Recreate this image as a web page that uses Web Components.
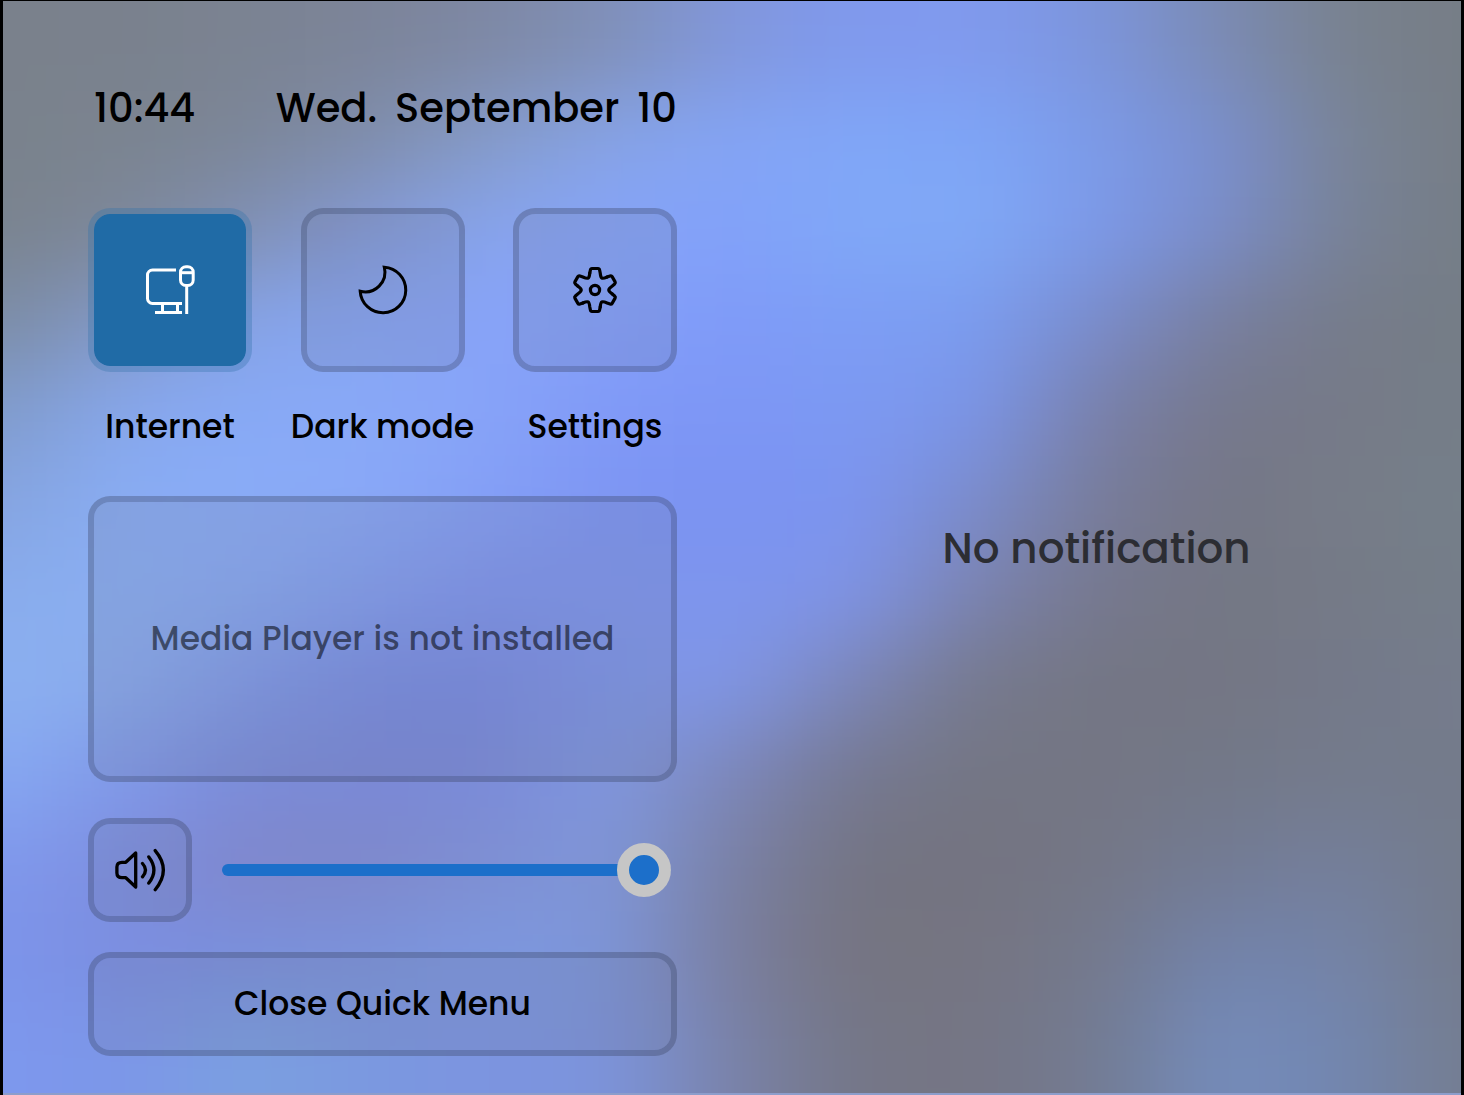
<!DOCTYPE html>
<html lang="en">
<head>
<meta charset="utf-8">
<title>Quick Menu</title>
<style>
  html, body { margin: 0; background: #000; }
  body { font-family: Poppins, Inter, "Open Sans", sans-serif; font-weight: 500; color: #000; }
</style>
</head>
<body>
<quick-menu>
  <quick-clock slot="menu"></quick-clock>
  <quick-tiles slot="menu">
    <quick-tile icon="network" label="Internet" active></quick-tile>
    <quick-tile icon="moon" label="Dark mode"></quick-tile>
    <quick-tile icon="gear" label="Settings"></quick-tile>
  </quick-tiles>
  <media-card slot="menu">Media Player is not installed</media-card>
  <volume-control slot="menu"></volume-control>
  <close-button slot="menu">Close Quick Menu</close-button>
  <notification-list slot="notifications">No notification</notification-list>
</quick-menu>
<script>
const define = (name, html, setup) => customElements.define(name, class extends HTMLElement {
  connectedCallback() {
    if (this.shadowRoot) return;
    this.attachShadow({ mode: 'open' }).innerHTML = html;
    if (setup) setup(this, this.shadowRoot);
  }
});

const surface = `
  box-sizing: border-box; border: 6px solid rgba(55, 65, 95, .34); border-radius: 22px;
  background: rgba(105, 115, 140, .16); background-clip: padding-box;`;

/* Soft colour field: one horizontal gradient per band, melted together by a blur. */
const bands = [
  '7a818c 7a818d 7b8392 7c8499 7e88a4 8090b8 8197dc 8099ee 809aee 7c95dc 7b8bb4 79828f 767d86',
  '7a828c 7b8490 7c8698 7f8dab 859bc9 86a3e6 84a4f5 80a6f7 7ea5f7 7c9ae8 7a8fcf 798498 767d86',
  '7a838e 7d8799 8090b4 8499d4 87a4ec 86a4f8 82a1fa 80a8f7 80a9f6 7c99ea 7a8dca 788298 757d86',
  '7c8ca4 8298c8 86a3e6 86a5f4 88a3f8 83a0fa 7f9af8 7d9ef5 7b9cf0 7a8ccc 787fa0 767b8a 757d86',
  '809bcb 87a7ec 87a9f6 89a9f7 87a3f8 8099f7 7d96f5 7c99f2 7b95e8 7980aa 76788c 767a88 757e88',
  '85a4e0 89adf4 8aacf7 89a8f7 849ff6 7d95f3 7a92f2 7c95f0 7b8ccc 787c9a 757686 767c88 757f89',
  '89acec 8aaef2 88a9f0 839eee 7f94ec 7f95ec 7e95ee 7f94e6 7b83b0 76788e 747784 757a87 757e89',
  '8bb0f0 8aabec 8099e6 788ce0 788ae0 7e95e6 8096e6 7c86b8 76798c 747684 747683 74798a 757c8c',
  '86a8f2 8098e8 7a8bd8 7a89d6 7a8ad8 8097de 7d87ba 757890 747683 747684 737888 747b8c 747b8b',
  '7f98ec 7e8ee0 8087ca 7f88ca 7f8fd2 7f96d8 7a80a4 747482 747380 747786 737b94 747f9c 747b8b',
  '7c94ea 7b8ddf 7a8fdc 7b92da 7c98e0 7e95d8 7a7e9e 757480 757582 74798c 7283ac 7484a8 747b8c',
  '7d98ee 7c96e8 7ba0e0 7b98e0 7c94e0 7c94dc 7a82a8 747686 757584 737b92 748cbc 7386b0 747d90'
];
define('blur-backdrop', `
  <style>
    :host { display: block; overflow: hidden; }
    .field { position: absolute; inset: -120px; display: flex; flex-direction: column; filter: blur(40px); }
    .field div { flex: 1 1 0; }
    .field div:first-child, .field div:last-child { flex-basis: 120px; }
  </style><div class="field"></div>`, (host, root) => {
  root.querySelector('.field').append(...bands.map(band => {
    const row = document.createElement('div');
    const c = band.split(' ').map(v => '#' + v);
    c[0] += ' 120px';
    c[c.length - 1] += ' calc(100% - 120px)';
    row.style.background = `linear-gradient(90deg, ${c.join(', ')})`;
    return row;
  }));
});

define('quick-menu', `
  <style>
    :host { display: grid; box-sizing: border-box; min-height: 100vh; padding: 1px 3px 0; }
    .panel { position: relative; display: grid; grid-template-columns: 1fr 1fr; border-bottom: 2px solid #8c9dcb; }
    blur-backdrop { position: absolute; inset: 0; }
    .menu { position: relative; display: flex; flex-direction: column; padding: 77px 55px 37px 85px; }
    .side { position: relative; display: grid; place-items: center; padding-top: 4px; }
  </style>
  <div class="panel">
    <blur-backdrop></blur-backdrop>
    <main class="menu"><slot name="menu"></slot></main>
    <aside class="side"><slot name="notifications"></slot></aside>
  </div>`);

define('quick-clock', `
  <style>
    :host { display: flex; justify-content: space-between; font-size: 40px; line-height: 60px; padding: 0 0 0 6px; margin-bottom: 70px; white-space: nowrap; }
    .date { display: flex; gap: 18px; }
  </style>
  <time>10:44</time>
  <time class="date"><span>Wed.</span><span>September</span><span>10</span></time>`);

define('quick-tiles', `
  <style>:host { display: flex; justify-content: space-between; margin-bottom: 45px; }</style><slot></slot>`);

const gearTooth = 'M-5.2-17L-4.6-20Q-4.3-21.5-3-21.5H3Q4.3-21.5 4.6-20L5.2-17C5.8-11.2 6.8-10.6 12.1-13';
const icons = {
  network: `<path d="M33 7H9.5a5 5 0 0 0-5 5v23.500a5 5 0 0 0 5 5H39M12 49.500H39M19.500 40.500v9M34.500 40.500v9M43.700 24v27"/>
            <rect x="37.500" y="3.800" width="12.700" height="18.700" rx="5.500"/><path d="M37.500 9.700h12.700"/>`,
  moon: `<path d="M28.300 4.200A22.800 22.800 0 1 1 4.200 28.300A19.800 19.800 0 0 0 28.300 4.200Z"/>`,
  gear: `<g transform="translate(27 27)" stroke-width="3.200" stroke-linecap="round">${[0, 60, 120, 180, 240, 300].map(a => `<path transform="rotate(${a})" d="${gearTooth}"/>`).join('')}<circle r="4.600"/></g>`,
  volume: `<g stroke-width="3.300" stroke-linecap="round" stroke-linejoin="round"><path d="M12.800 19.300H9C5.500 19.300 3.900 21 3.900 24v6c0 3 1.600 4.700 5.100 4.700h3.800L22.700 44V10Z"/>
           <path d="M29.500 20.500Q35.500 27 29.500 33.800M35.800 13.900Q46 27 35.800 40.100M42.200 7.600Q58.500 27 42.200 46.800"/></g>`
};
define('line-icon', `
  <style>:host { display: block; width: 54px; height: 54px; } svg { display: block; }</style>
  <svg viewBox="0 0 54 54" width="54" height="54" fill="none" stroke="currentColor" stroke-width="3" aria-hidden="true"></svg>`,
  (host, root) => { root.querySelector('svg').innerHTML = icons[host.getAttribute('name')]; });

define('quick-tile', `
  <style>
    :host { display: flex; flex-direction: column; align-items: center; width: 164px; }
    button { ${surface} display: grid; place-items: center; width: 164px; height: 164px; padding: 0; color: inherit; }
    :host([active]) button { background-color: #206ba6; border-color: rgba(50, 115, 170, .34); color: #fff; }
    label { font-size: 33px; line-height: 48px; margin-top: 31px; white-space: nowrap; }
  </style>
  <button id="tile" type="button"></button>
  <label for="tile"></label>`, (host, root) => {
  const icon = document.createElement('line-icon');
  icon.setAttribute('name', host.getAttribute('icon'));
  root.querySelector('button').append(icon);
  root.querySelector('label').textContent = host.getAttribute('label');
});

define('media-card', `
  <style>
    :host { ${surface} display: grid; place-items: center; min-height: 286px; margin-bottom: 36px; font-size: 33px; line-height: 48px; white-space: nowrap; }
    p { margin: 0; color: rgba(0, 0, 0, .54); }
  </style><p><slot></slot></p>`);

define('volume-control', `
  <style>
    :host { display: flex; align-items: center; gap: 30px; padding-right: 6px; margin-bottom: 30px; }
    button { ${surface} display: grid; place-items: center; flex: none; width: 104px; height: 104px; padding: 0; color: inherit; }
    input { appearance: none; -webkit-appearance: none; flex: 1; min-width: 0; height: 54px; margin: 0; background: none; }
    input::-webkit-slider-runnable-track { height: 12px; border-radius: 6px; background: #1c6fca; }
    input::-webkit-slider-thumb { -webkit-appearance: none; box-sizing: border-box; width: 54px; height: 54px; margin-top: -21px; border: 12px solid #c6c6c6; border-radius: 50%; background: #1c6fca; }
  </style>
  <button type="button" aria-label="Mute"><line-icon name="volume"></line-icon></button>
  <input type="range" min="0" max="100" value="100" aria-label="Volume">`);

define('close-button', `
  <style>
    :host { display: block; }
    button { ${surface} width: 100%; height: 104px; padding: 0; font: inherit; font-size: 33px; line-height: 48px; color: inherit; }
  </style><button type="button"><slot></slot></button>`);

define('notification-list', `
  <style>:host { display: block; font-size: 42px; line-height: 60px; color: #2c2d33; white-space: nowrap; }</style><slot></slot>`);
</script>
</body>
</html>
